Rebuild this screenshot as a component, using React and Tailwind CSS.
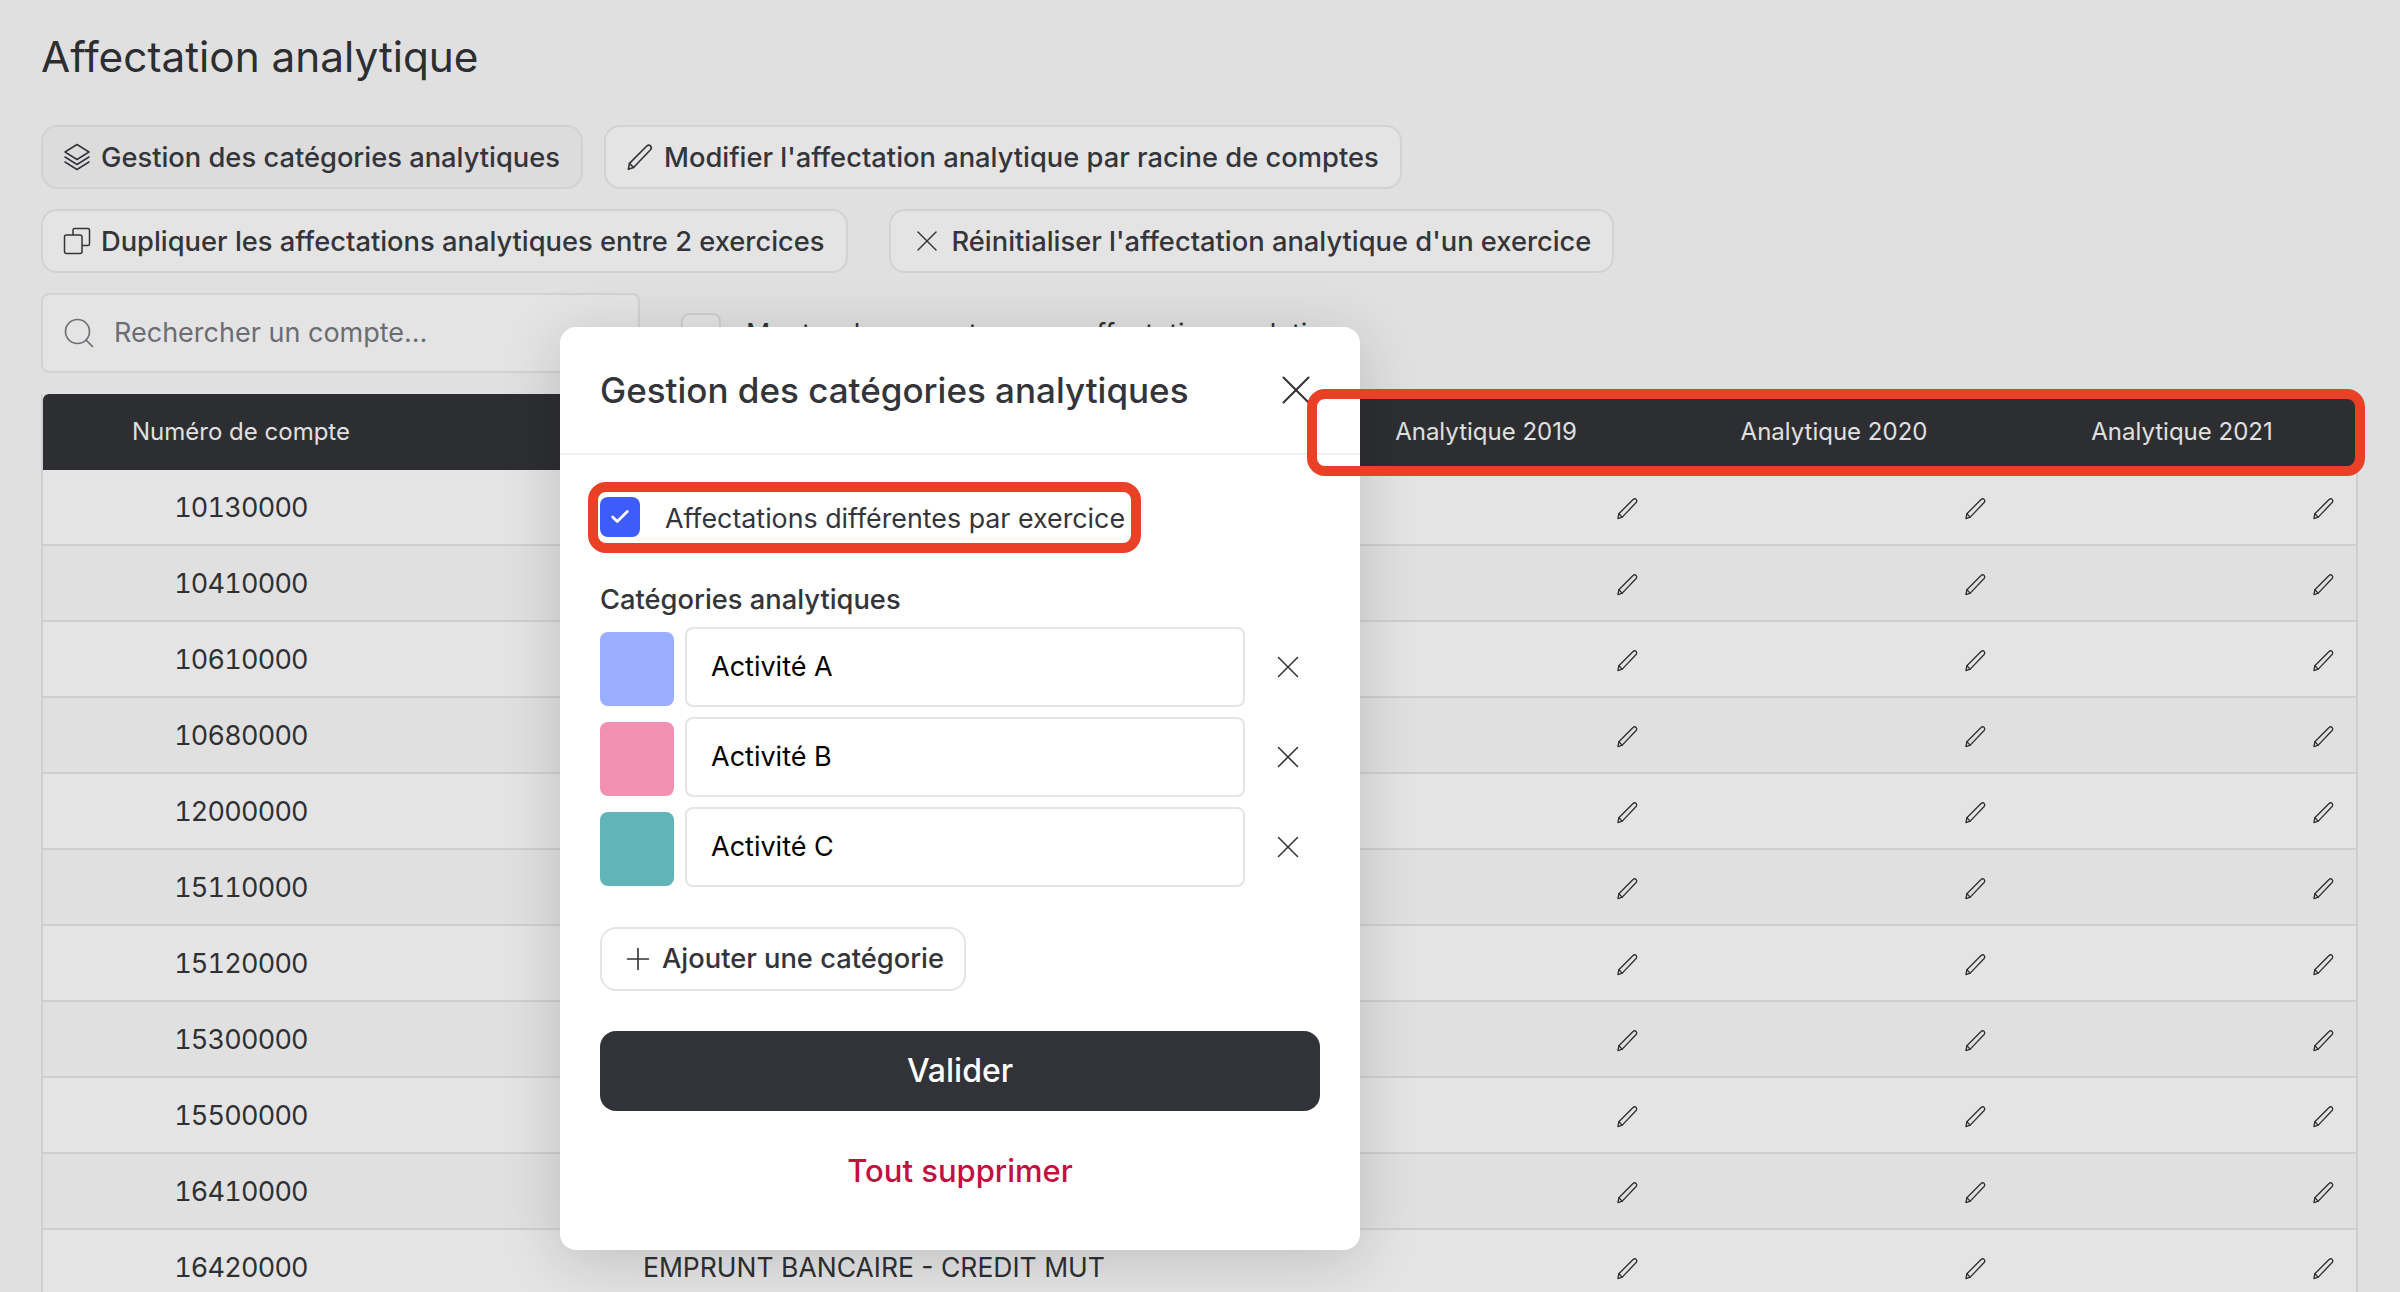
import React from "react";
import { Check, Plus, X, Search } from "lucide-react";

const comptes = [
  "10130000",
  "10410000",
  "10610000",
  "10680000",
  "12000000",
  "15110000",
  "15120000",
  "15300000",
  "15500000",
  "16410000",
  "16420000",
];

const categories = [
  { label: "Activité A", swatch: "bg-[#99aeff]" },
  { label: "Activité B", swatch: "bg-[#f191b1]" },
  { label: "Activité C", swatch: "bg-[#61b5b8]" },
];

function PencilIcon({ className }) {
  return (
    <svg viewBox="0 0 24 24" fill="none" stroke="currentColor" strokeWidth="1.4" strokeLinejoin="round" strokeLinecap="round" className={className}>
      <path d="M2 22.5 L3 17.5 L17.8 2.6 Q19.6 1 21 2.5 Q22.4 4.2 21 5.8 L6.5 21 Z" />
      <path d="M3 17.5 L6.5 21" />
    </svg>
  );
}

function LayersIcon({ className }) {
  return (
    <svg viewBox="0 0 28 28" fill="none" stroke="currentColor" strokeWidth="1.5" strokeLinejoin="round" strokeLinecap="round" className={className}>
      <path d="M14 1.5 L26 9 L14 16.5 L2 9 Z" />
      <path d="M2 14 L14 21.5 L26 14" />
      <path d="M2 19 L14 26.5 L26 19" />
    </svg>
  );
}

function CopyIcon({ className }) {
  return (
    <svg viewBox="0 0 28 28" fill="none" stroke="currentColor" strokeWidth="1.5" strokeLinejoin="round" className={className}>
      <path d="M10 8 V3 Q10 1.5 11.5 1.5 H25 Q26.5 1.5 26.5 3 V17 Q26.5 18.5 25 18.5 H19" />
      <rect x="1.5" y="8" width="17.5" height="18.5" rx="2" />
    </svg>
  );
}

function ToolButton({ icon, active, gap, children }) {
  return (
    <button
      className={`flex h-[64px] items-center rounded-[16px] border-2 border-[#d2d2d2] pl-[20px] pr-[21px] text-[27.3px] font-[450] text-[#34353a] ${gap} ${
        active ? "bg-[#dcdcdc]" : "bg-[#e4e4e4]"
      }`}
    >
      {icon}
      <span className="pt-[2px]">{children}</span>
    </button>
  );
}

export default function App() {
  return (
    <div className="relative h-[1292px] overflow-hidden bg-[#e0e0e0] font-['Inter',sans-serif] text-[#2f3034]">
      <div className="pl-[41px] pr-[42px] pt-[33px]">
        <h1 className="text-[42.3px] font-normal leading-[48px] text-[#2d2e32]">Affectation analytique</h1>

        <div className="mt-[44px] flex gap-[21px]">
          <ToolButton active gap="gap-[10px]" icon={<LayersIcon className="h-[28px] w-[28px]" />}>
            Gestion des catégories analytiques
          </ToolButton>
          <ToolButton gap="gap-[10px]" icon={<PencilIcon className="h-[28px] w-[28px]" />}>
            Modifier l'affectation analytique par racine de comptes
          </ToolButton>
        </div>

        <div className="mt-[20px] flex gap-[41px]">
          <ToolButton gap="gap-[10px]" icon={<CopyIcon className="h-[28px] w-[28px]" />}>
            Dupliquer les affectations analytiques entre 2 exercices
          </ToolButton>
          <ToolButton gap="gap-[7px]" icon={<X className="ml-[-2px] h-[36px] w-[36px]" strokeWidth={1} />}>
            Réinitialiser l'affectation analytique d'un exercice
          </ToolButton>
        </div>

        <div className="mt-[20px] flex items-center gap-[41px]">
          <div className="flex h-[80px] w-[599px] items-center gap-[17px] rounded-[8px] border-2 border-[#d2d2d2] bg-[#e4e4e4] pl-[18px]">
            <Search className="h-[36px] w-[36px] text-[#6c6d72]" strokeWidth={1.1} />
            <span className="text-[27px] text-[#6c6d72]">Rechercher un compte…</span>
          </div>
          <div className="flex items-center gap-[25px]">
            <div className="h-[40px] w-[40px] rounded-[8px] border-2 border-[#cfcfcf] bg-[#e4e4e4]" />
            <span className="text-[26.8px]">Montrer les comptes sans affectation analytique</span>
          </div>
        </div>

        <div className="mt-[21px] border-x-2 border-[#cfcfcf]">
          <div className="flex h-[76px] items-center rounded-t-[6px] bg-[#2d2e32] text-[24px] text-[#e0e0e0]">
            <div className="w-[396px] text-center">Numéro de compte</div>
            <div className="flex-1" />
            <div className="w-[348px] text-center">Analytique 2019</div>
            <div className="w-[348px] text-center">Analytique 2020</div>
            <div className="w-[348px] text-center">Analytique 2021</div>
          </div>
          {comptes.map((numero, i) => (
            <div
              key={numero}
              className={`flex h-[76px] items-center border-b-2 border-[#cfcfcf] pt-[2px] ${
                i % 2 === 0 ? "bg-[#e4e4e4]" : "bg-[#e0e0e0]"
              }`}
            >
              <div className="w-[396px] pt-[1px] text-center text-[27px] tabular-nums tracking-[-0.8px]">{numero}</div>
              <div className="flex-1 pl-[204px] text-[26.5px]">{i === 10 ? "EMPRUNT BANCAIRE - CREDIT MUT" : ""}</div>
              {[2019, 2020, 2021].map((annee) => (
                <div key={annee} className="flex w-[348px] justify-end pr-[21px]">
                  <PencilIcon className="h-[23px] w-[23px]" />
                </div>
              ))}
            </div>
          ))}
        </div>
      </div>

      {/* Modal */}
      <div className="absolute left-[560px] top-[327px] h-[923px] w-[800px] rounded-[16px] bg-white shadow-[0_10px_60px_rgba(0,0,0,0.16)]">
        <div className="flex h-[128px] items-center justify-between border-b-2 border-[#f1f1f3] pl-[40px] pr-[39px]">
          <h2 className="text-[35px] font-medium text-[#34353a]">Gestion des catégories analytiques</h2>
          <X className="h-[50px] w-[50px] text-[#34353a]" strokeWidth={1} />
        </div>

        <div className="px-[40px]">
          <div className="mt-[41px] flex items-center gap-[25px]">
            <div className="flex h-[40px] w-[40px] items-center justify-center rounded-[8px] bg-[#3d5cfa]">
              <Check className="h-[22px] w-[22px] text-white" strokeWidth={3} />
            </div>
            <span className="pt-[2px] text-[26.8px] text-[#34353a]">Affectations différentes par exercice</span>
          </div>

          <div className="mt-[42px] text-[27.3px] font-medium leading-[40px] text-[#34353a]">Catégories analytiques</div>

          <div className="mt-[7px] flex flex-col gap-[10px]">
            {categories.map((cat) => (
              <div key={cat.label} className="flex h-[80px] items-center gap-[11px]">
                <div className={`mt-[4px] h-[74px] w-[74px] rounded-[8px] ${cat.swatch}`} />
                <div className="flex h-[80px] w-[560px] items-center rounded-[8px] border-2 border-[#e4e4e9] pl-[24px] text-[27px] text-black">
                  {cat.label}
                </div>
                <X className="ml-[13px] h-[38px] w-[38px] text-[#34353a]" strokeWidth={1} />
              </div>
            ))}
          </div>

          <button className="mt-[40px] flex h-[64px] items-center gap-[6px] rounded-[16px] border-2 border-[#e4e4e9] pl-[18px] pr-[20px] text-[27.3px] font-[450] text-[#34353a]">
            <Plus className="h-[36px] w-[36px]" strokeWidth={1.1} />
            Ajouter une catégorie
          </button>

          <button className="mt-[40px] flex h-[80px] w-[720px] items-center justify-center rounded-[16px] bg-[#323338] text-[32px] font-medium text-white">
            Valider
          </button>

          <div className="mt-[37px] text-center text-[31px] font-medium text-[#c2103f]">Tout supprimer</div>
        </div>
      </div>

      {/* Red annotations */}
      <div className="absolute left-[588px] top-[482px] h-[71px] w-[553px] rounded-[18px] border-[10px] border-[#ea4025]" />
      <div className="absolute left-[1307px] top-[389px] h-[87px] w-[1058px] rounded-[18px] border-[10px] border-[#ea4025]" />
    </div>
  );
}
